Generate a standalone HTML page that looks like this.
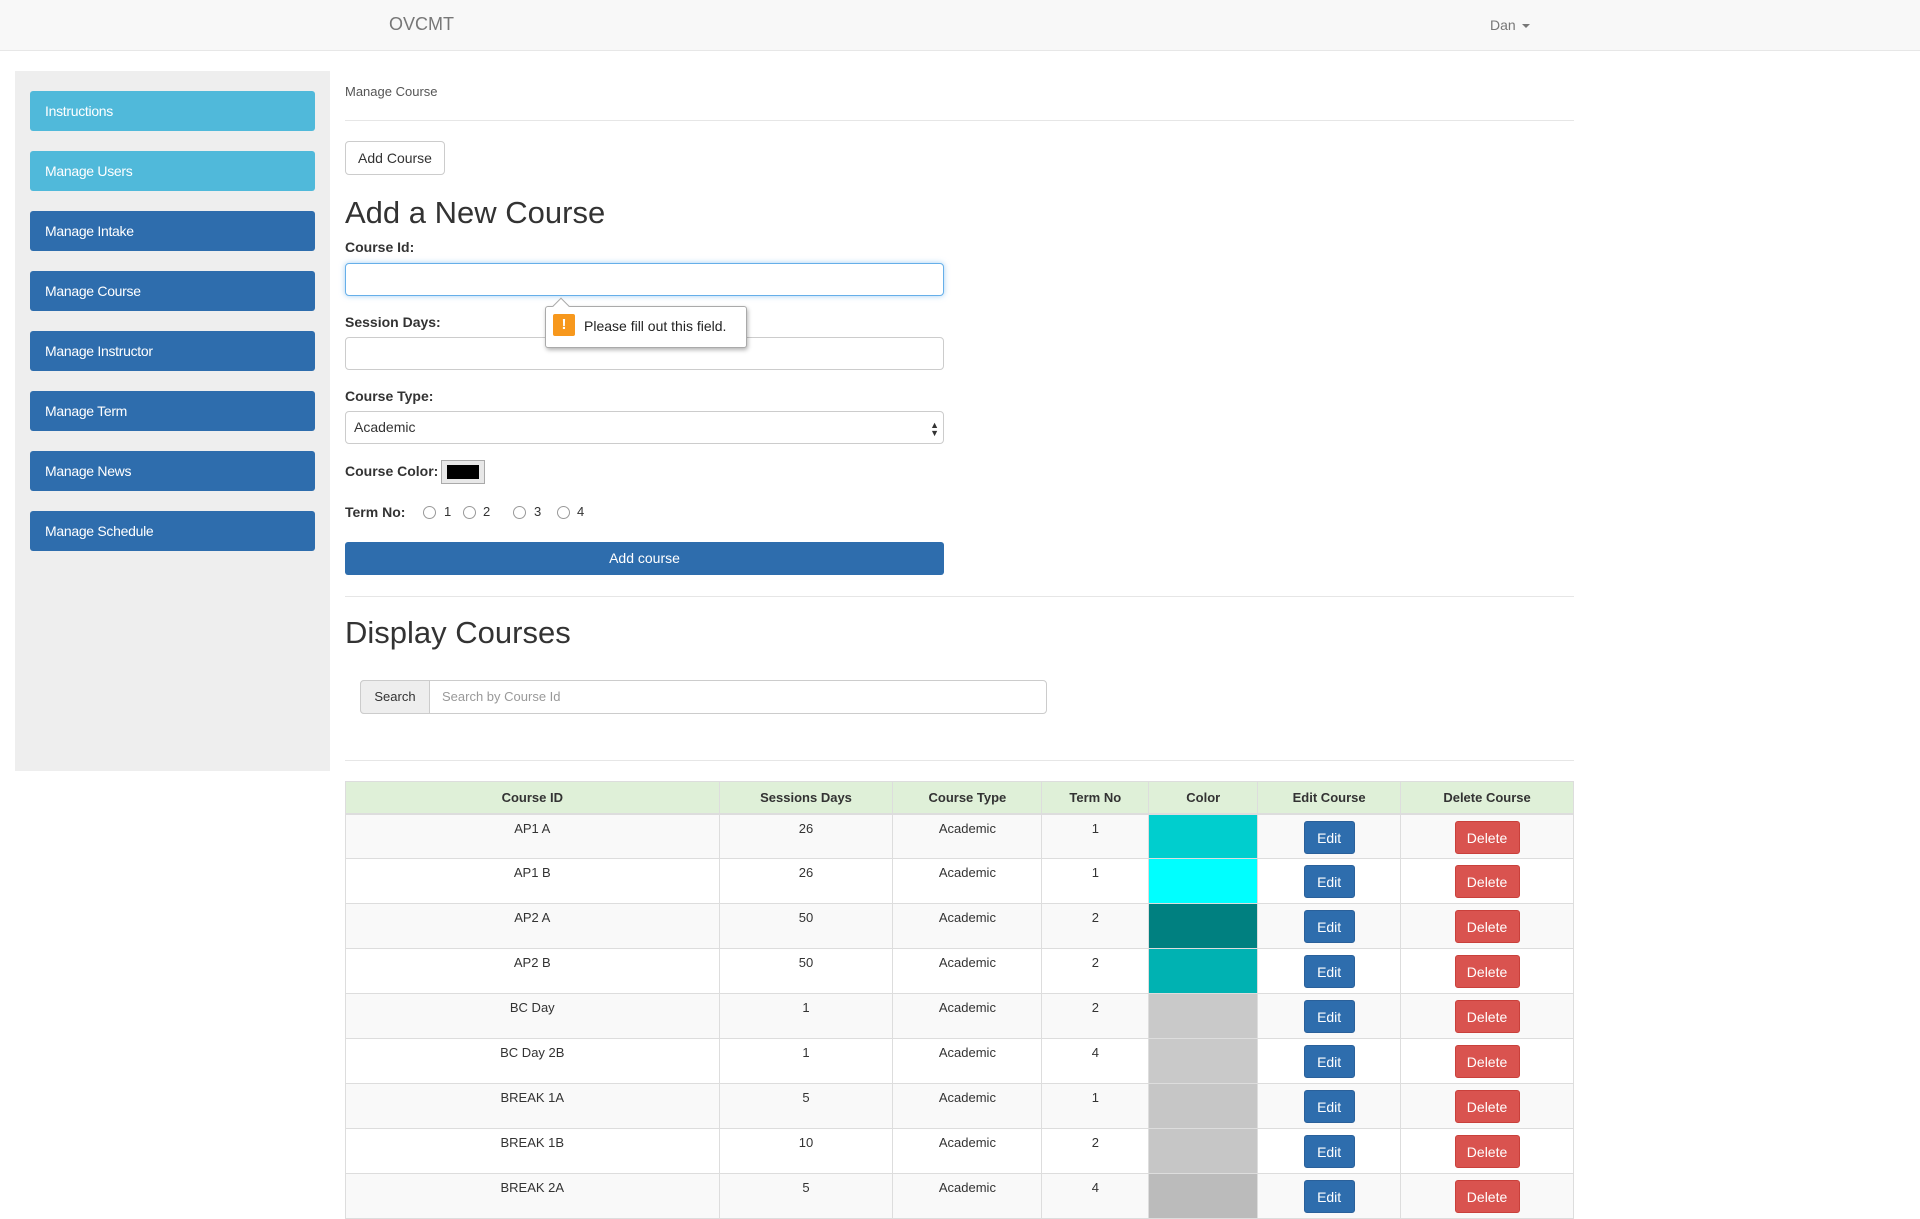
<!DOCTYPE html>
<html><head><meta charset="utf-8"><style>
*{box-sizing:border-box;margin:0;padding:0}
body{width:1920px;height:1200px;overflow:hidden;background:#fff;font-family:"Liberation Sans",Arial,sans-serif;color:#333;font-size:14px;position:relative}
.a{position:absolute}
.nav{left:0;top:0;width:1920px;height:51px;background:#f8f8f8;border-bottom:1px solid #e7e7e7}
.side{left:15px;top:71px;width:315px;height:700px;background:#eee}
.sb{left:30px;width:285px;height:40px;border-radius:3px;color:#fff;font-size:14px;line-height:40px;padding-left:15px;background:#2e6dad;letter-spacing:-0.3px}
.sb.c{background:#50b9da}
.lbl{font-weight:bold;font-size:14px}
.inp{left:345px;width:599px;height:33px;border:1px solid #ccc;border-radius:4px;background:#fff}
.hr{left:345px;width:1229px;height:1px;background:#e6e6e6}
h2{font-weight:normal;font-size:31px;position:absolute;left:345px}
table{position:absolute;left:345px;top:781px;width:1229px;border-collapse:collapse;font-size:13px}
td,th{border:1px solid #ddd;text-align:center;vertical-align:top;height:45px;padding:6px 8px 0}
th{background:#dff0d8;height:32px;padding:8px 8px 0;border-bottom:2px solid #ddd}
tr:nth-child(even) td{background:#f9f9f9}
td.col{padding:0}
.e,.d{display:inline-block;color:#fff;border-radius:3px;height:33px;line-height:33px;margin-top:0px;font-size:14px}
.e{width:51px;background:#2e6dad;border:1px solid #2a609a}
.d{width:65px;background:#d9534f;border:1px solid #c9403b}
.rad{width:13px;height:13px;border:1px solid #999;border-radius:50%;top:506px;background:#fff}
</style></head><body>
<div class="a nav"></div>
<div class="a" style="left:389px;top:14px;font-size:18px;color:#777">OVCMT</div>
<div class="a" style="left:1490px;top:17px;font-size:14px;color:#777">Dan</div>
<div class="a" style="left:1522px;top:24px;width:0;height:0;border-left:4px solid transparent;border-right:4px solid transparent;border-top:4px solid #777"></div>
<div class="a side"></div>
<div class="a sb c" style="top:91px">Instructions</div>
<div class="a sb c" style="top:151px">Manage Users</div>
<div class="a sb" style="top:211px">Manage Intake</div>
<div class="a sb" style="top:271px">Manage Course</div>
<div class="a sb" style="top:331px">Manage Instructor</div>
<div class="a sb" style="top:391px">Manage Term</div>
<div class="a sb" style="top:451px">Manage News</div>
<div class="a sb" style="top:511px">Manage Schedule</div>

<div class="a" style="left:345px;top:84px;font-size:13px;color:#555">Manage Course</div>
<div class="a hr" style="top:120px"></div>
<div class="a" style="left:345px;top:141px;width:100px;height:34px;border:1px solid #ccc;border-radius:4px;font-size:14px;line-height:32px;text-align:center">Add Course</div>
<h2 style="top:195px">Add a New Course</h2>
<div class="a lbl" style="left:345px;top:239px">Course Id:</div>
<div class="a inp" style="top:263px;border-color:#66afe9;box-shadow:0 0 6px rgba(102,175,233,.6)"></div>
<div class="a lbl" style="left:345px;top:314px">Session Days:</div>
<div class="a inp" style="top:337px"></div>
<div class="a" style="left:545px;top:306px;width:202px;height:42px;background:#fff;border:1px solid #aaa;border-radius:3px;box-shadow:1px 2px 4px rgba(0,0,0,.3)"></div>
<div class="a" style="left:555px;top:300px;width:12px;height:12px;background:#fff;border-left:1px solid #aaa;border-top:1px solid #aaa;transform:rotate(45deg)"></div>
<div class="a" style="left:553px;top:314px;width:22px;height:22px;background:#f7981d;border-radius:2px;color:#fff;font-weight:bold;text-align:center;line-height:22px;font-size:15px">!</div>
<div class="a" style="left:584px;top:318px;font-size:14px;color:#222">Please fill out this field.</div>
<div class="a lbl" style="left:345px;top:388px">Course Type:</div>
<div class="a inp" style="top:411px;padding-left:8px;line-height:31px;font-size:14px">Academic<span style="position:absolute;right:4px;font-size:9px;line-height:8px;top:9px">▲<br>▼</span></div>
<div class="a lbl" style="left:345px;top:463px">Course Color:</div>
<div class="a" style="left:441px;top:460px;width:44px;height:24px;border:1px solid #aaa;background:#e8e8e8;padding:4px 5px"><div style="width:32px;height:14px;background:#000"></div></div>
<div class="a lbl" style="left:345px;top:504px">Term No:</div>
<div class="a rad" style="left:423px"></div><div class="a" style="left:444px;top:504px;font-size:13px">1</div>
<div class="a rad" style="left:463px"></div><div class="a" style="left:483px;top:504px;font-size:13px">2</div>
<div class="a rad" style="left:513px"></div><div class="a" style="left:534px;top:504px;font-size:13px">3</div>
<div class="a rad" style="left:557px"></div><div class="a" style="left:577px;top:504px;font-size:13px">4</div>
<div class="a" style="left:345px;top:542px;width:599px;height:33px;background:#2e6dad;border-radius:3px;color:#fff;text-align:center;line-height:33px;font-size:14px">Add course</div>
<div class="a hr" style="top:596px"></div>
<h2 style="top:615px">Display Courses</h2>
<div class="a" style="left:360px;top:680px;width:687px;height:34px;border:1px solid #ccc;border-radius:4px;background:#fff"></div>
<div class="a" style="left:360px;top:680px;width:70px;height:34px;border:1px solid #ccc;border-radius:4px 0 0 4px;background:#eee;text-align:center;line-height:32px;font-size:13px">Search</div>
<div class="a" style="left:442px;top:689px;font-size:13px;color:#999">Search by Course Id</div>
<div class="a hr" style="top:760px"></div>
<table>
<colgroup><col style="width:374px"><col style="width:174px"><col style="width:149px"><col style="width:107px"><col style="width:109px"><col style="width:143px"><col style="width:173px"></colgroup>
<tr><th>Course ID</th><th>Sessions Days</th><th>Course Type</th><th>Term No</th><th>Color</th><th>Edit Course</th><th>Delete Course</th></tr>
<tr><td>AP1 A</td><td>26</td><td>Academic</td><td>1</td><td class="col" style="background:#00cece!important"></td><td><span class="e">Edit</span></td><td><span class="d">Delete</span></td></tr>
<tr><td>AP1 B</td><td>26</td><td>Academic</td><td>1</td><td class="col" style="background:#00ffff!important"></td><td><span class="e">Edit</span></td><td><span class="d">Delete</span></td></tr>
<tr><td>AP2 A</td><td>50</td><td>Academic</td><td>2</td><td class="col" style="background:#008080!important"></td><td><span class="e">Edit</span></td><td><span class="d">Delete</span></td></tr>
<tr><td>AP2 B</td><td>50</td><td>Academic</td><td>2</td><td class="col" style="background:#00b2b2!important"></td><td><span class="e">Edit</span></td><td><span class="d">Delete</span></td></tr>
<tr><td>BC Day</td><td>1</td><td>Academic</td><td>2</td><td class="col" style="background:#c9c9c9!important"></td><td><span class="e">Edit</span></td><td><span class="d">Delete</span></td></tr>
<tr><td>BC Day 2B</td><td>1</td><td>Academic</td><td>4</td><td class="col" style="background:#c9c9c9!important"></td><td><span class="e">Edit</span></td><td><span class="d">Delete</span></td></tr>
<tr><td>BREAK 1A</td><td>5</td><td>Academic</td><td>1</td><td class="col" style="background:#c6c6c6!important"></td><td><span class="e">Edit</span></td><td><span class="d">Delete</span></td></tr>
<tr><td>BREAK 1B</td><td>10</td><td>Academic</td><td>2</td><td class="col" style="background:#c6c6c6!important"></td><td><span class="e">Edit</span></td><td><span class="d">Delete</span></td></tr>
<tr><td>BREAK 2A</td><td>5</td><td>Academic</td><td>4</td><td class="col" style="background:#bbbbbb!important"></td><td><span class="e">Edit</span></td><td><span class="d">Delete</span></td></tr>
</table>
</body></html>
